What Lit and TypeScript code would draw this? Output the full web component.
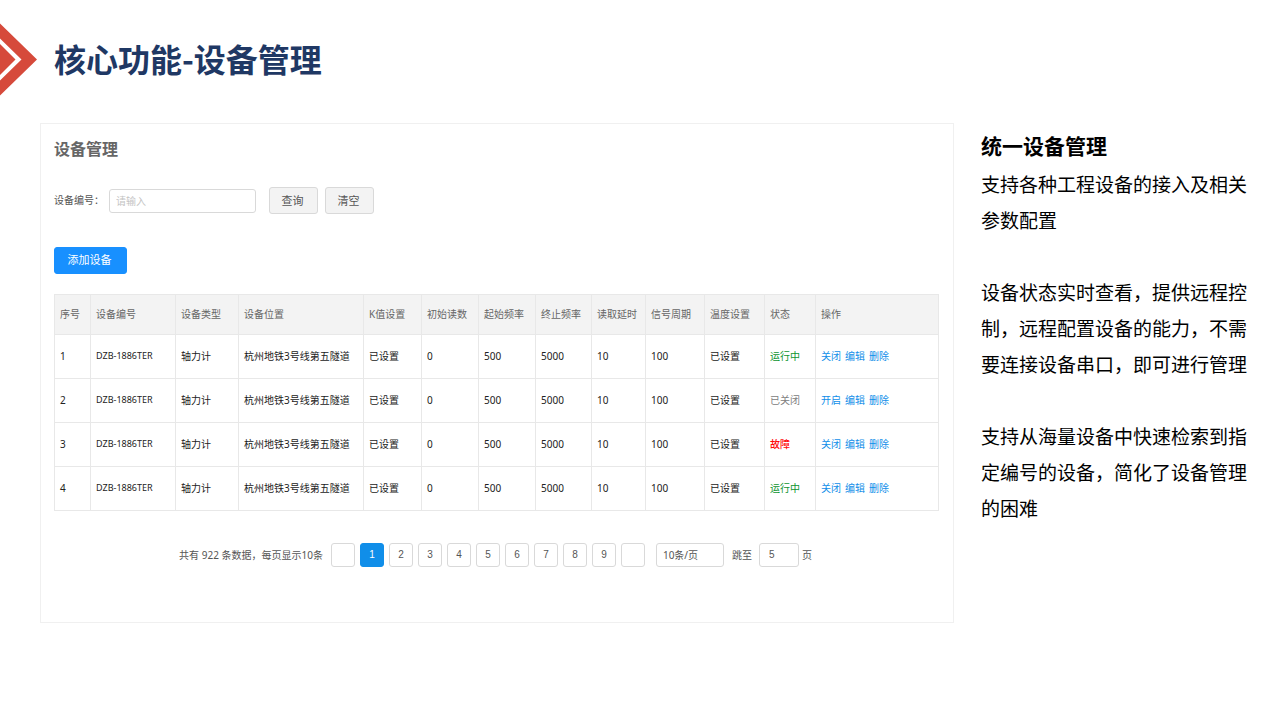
import { LitElement, html, css } from "lit";
import { customElement, property, state } from "lit/decorators.js";
import { classMap } from "lit/directives/class-map.js";

type Status = "running" | "closed" | "fault";

interface Device {
  id: number;
  code: string;
  kind: string;
  place: string;
  kValue: string;
  initial: number;
  startFreq: number;
  endFreq: number;
  delay: number;
  period: number;
  temperature: string;
  status: Status;
}

const STATUS_TEXT: Record<Status, string> = {
  running: "运行中",
  closed: "已关闭",
  fault: "故障",
};

const COLUMNS: { title: string; width?: number }[] = [
  { title: "序号", width: 36 },
  { title: "设备编号", width: 85 },
  { title: "设备类型", width: 63 },
  { title: "设备位置", width: 125 },
  { title: "K值设置", width: 58 },
  { title: "初始读数", width: 57 },
  { title: "起始频率", width: 57 },
  { title: "终止频率", width: 56 },
  { title: "读取延时", width: 54 },
  { title: "信号周期", width: 59 },
  { title: "温度设置", width: 60 },
  { title: "状态", width: 51 },
  { title: "操作" },
];

const STATUSES: Status[] = ["running", "closed", "fault", "running"];

const DEVICES: Device[] = STATUSES.map((status, i) => ({
  id: i + 1,
  code: "DZB-1886TER",
  kind: "轴力计",
  place: "杭州地铁3号线第五隧道",
  kValue: "已设置",
  initial: 0,
  startFreq: 500,
  endFreq: 5000,
  delay: 10,
  period: 100,
  temperature: "已设置",
  status,
}));

@customElement("device-table")
class DeviceTable extends LitElement {
  @property({ attribute: false }) devices: Device[] = [];

  static styles = css`
    :host {
      display: block;
      font-family: "Noto Sans", "Noto Sans CJK SC", sans-serif;
    }
    .table {
      width: 100%;
      table-layout: fixed;
      border-collapse: collapse;
      font-size: 10px;
      line-height: 16px;
      color: #222;
    }
    .cell {
      height: 44px;
      box-sizing: border-box;
      padding: 0 0 2px 5px;
      border: 1px solid #e8e8e8;
      text-align: left;
      font-weight: 400;
      white-space: nowrap;
    }
    .head {
      height: 40px;
      background: #f3f3f3;
      color: #666;
    }
    .code {
      font-size: 9px;
    }
    .running {
      color: #0d9430;
    }
    .closed {
      color: #808080;
    }
    .fault {
      color: #ff0a0a;
      font-weight: 500;
    }
    .actions {
      display: flex;
      gap: 4px;
    }
    .link {
      color: #108ee9;
      text-decoration: none;
    }
  `;

  render() {
    return html`
      <table class="table">
        <colgroup>
          ${COLUMNS.map((c) =>
            c.width ? html`<col style="width:${c.width}px" />` : html`<col />`
          )}
        </colgroup>
        <thead>
          <tr>
            ${COLUMNS.map((c) => html`<th class="cell head" scope="col">${c.title}</th>`)}
          </tr>
        </thead>
        <tbody>
          ${this.devices.map(
            (d) => html`
              <tr>
                <td class="cell">${d.id}</td>
                <td class="cell code">${d.code}</td>
                <td class="cell">${d.kind}</td>
                <td class="cell">${d.place}</td>
                <td class="cell">${d.kValue}</td>
                <td class="cell">${d.initial}</td>
                <td class="cell">${d.startFreq}</td>
                <td class="cell">${d.endFreq}</td>
                <td class="cell">${d.delay}</td>
                <td class="cell">${d.period}</td>
                <td class="cell">${d.temperature}</td>
                <td class=${classMap({ cell: true, [d.status]: true })}>
                  ${STATUS_TEXT[d.status]}
                </td>
                <td class="cell">
                  <div class="actions">
                    <a class="link" href="#toggle">${d.status === "closed" ? "开启" : "关闭"}</a>
                    <a class="link" href="#edit">编辑</a>
                    <a class="link" href="#delete">删除</a>
                  </div>
                </td>
              </tr>
            `
          )}
        </tbody>
      </table>
    `;
  }
}

@customElement("page-bar")
class PageBar extends LitElement {
  @property({ type: Number }) total = 0;
  @state() private current = 1;

  static styles = css`
    :host {
      display: flex;
      justify-content: center;
      align-items: center;
      padding-right: 2px;
      font-family: "Noto Sans", "Noto Sans CJK SC", sans-serif;
      font-size: 10px;
      line-height: 16px;
      color: #555;
    }
    .pages {
      display: flex;
      gap: 5px;
      margin: 0 11px 0 8px;
    }
    .page,
    .size,
    .jump {
      box-sizing: border-box;
      height: 24px;
      border: 1px solid #d9d9d9;
      border-radius: 3px;
      background: #fff;
      color: #555;
      font-family: inherit;
      font-size: 10px;
    }
    .page {
      width: 24px;
      padding: 0 0 2px;
      font-family: "Liberation Sans", Arial, sans-serif;
    }
    .current {
      background: #108ee9;
      border-color: #108ee9;
      color: #fff;
    }
    .size {
      appearance: none;
      width: 68px;
      padding: 0 6px;
      margin-right: 8px;
    }
    .jump {
      width: 40px;
      padding: 0 9px 2px;
      margin: 0 3px 0 7px;
      font-family: "Liberation Sans", Arial, sans-serif;
    }
  `;

  render() {
    return html`
      <span>共有 ${this.total} 条数据，每页显示10条</span>
      <div class="pages">
        <button class="page" aria-label="上一页"></button>
        ${[1, 2, 3, 4, 5, 6, 7, 8, 9].map(
          (n) => html`
            <button
              class=${classMap({ page: true, current: n === this.current })}
              @click=${() => (this.current = n)}
            >
              ${n}
            </button>
          `
        )}
        <button class="page" aria-label="下一页"></button>
      </div>
      <select class="size" aria-label="每页条数">
        <option>10条/页</option>
      </select>
      <label for="jump">跳至</label>
      <input class="jump" id="jump" type="text" value="5" />
      <span>页</span>
    `;
  }
}

@customElement("app-root")
class AppRoot extends LitElement {
  static styles = css`
    :host {
      display: block;
      min-height: 100vh;
      background: #fff;
      color: #000;
      font-family: "Noto Sans CJK SC", sans-serif;
    }
    .banner {
      display: flex;
      align-items: center;
      gap: 17px;
      padding: 23px 0 27px;
    }
    .arrow {
      display: block;
      width: 37px;
      height: 73px;
    }
    .title {
      margin: 0;
      padding-bottom: 4px;
      font-size: 32px;
      line-height: 48px;
      font-weight: 700;
      color: #1f3864;
    }
    .content {
      display: grid;
      grid-template-columns: minmax(0, 1fr) 266px;
      align-items: start;
      gap: 27px;
      padding: 0 33px 0 40px;
    }
    .panel {
      padding: 12px 14px 55px 13px;
      border: 1px solid #f0f0f0;
    }
    .panel-title {
      margin: 0 0 27px;
      font-size: 16px;
      line-height: 24px;
      font-weight: 700;
      color: #666;
    }
    .search {
      display: flex;
      align-items: center;
      margin-bottom: 33px;
      font-size: 10px;
      line-height: 16px;
      color: #555;
    }
    .label {
      padding-bottom: 2px;
    }
    .field {
      box-sizing: border-box;
      width: 147px;
      height: 24px;
      margin: 0 13px 0 5px;
      padding: 0 6px;
      border: 1px solid #d9d9d9;
      border-radius: 3px;
      font-family: inherit;
      font-size: 10px;
    }
    .field::placeholder {
      color: #c4c4c4;
    }
    .button {
      box-sizing: border-box;
      width: 49px;
      height: 27px;
      margin-right: 7px;
      padding: 0 2px 2px 0;
      border: 1px solid #d9d9d9;
      border-radius: 3px;
      background: #f3f3f3;
      color: #555;
      font-family: inherit;
      font-size: 11px;
      line-height: 16px;
    }
    .primary {
      display: block;
      width: 73px;
      margin-bottom: 20px;
      padding-bottom: 4px;
      border-color: #1890ff;
      background: #1890ff;
      color: #fff;
    }
    .devices {
      margin-bottom: 32px;
    }
    .notes {
      padding-top: 3px;
      font-size: 19px;
      line-height: 36px;
    }
    .notes-title {
      margin: 0 0 2px;
      font-size: 21px;
      line-height: 38px;
      font-weight: 700;
    }
    .note {
      margin: 0 0 36px;
    }
  `;

  render() {
    return html`
      <header class="banner">
        <svg class="arrow" viewBox="0 0 37 73" aria-hidden="true">
          <path d="M0 0.5L37 36.5L0 72.5V57.5L21.5 36.5L0 15.5Z" fill="#d64a3b" />
          <path d="M0 21L15.5 36.5L0 52Z" fill="#d64a3b" />
        </svg>
        <h1 class="title">核心功能-设备管理</h1>
      </header>
      <main class="content">
        <section class="panel">
          <h2 class="panel-title">设备管理</h2>
          <div class="search">
            <label class="label" for="code">设备编号：</label>
            <input class="field" id="code" type="text" placeholder="请输入" />
            <button class="button">查询</button>
            <button class="button">清空</button>
          </div>
          <button class="button primary">添加设备</button>
          <device-table class="devices" .devices=${DEVICES}></device-table>
          <page-bar total="922"></page-bar>
        </section>
        <aside class="notes">
          <h2 class="notes-title">统一设备管理</h2>
          <p class="note">支持各种工程设备的接入及相关参数配置</p>
          <p class="note">
            设备状态实时查看，提供远程控制，远程配置设备的能力，不需要连接设备串口，即可进行管理
          </p>
          <p class="note">支持从海量设备中快速检索到指定编号的设备，简化了设备管理的困难</p>
        </aside>
      </main>
    `;
  }
}
